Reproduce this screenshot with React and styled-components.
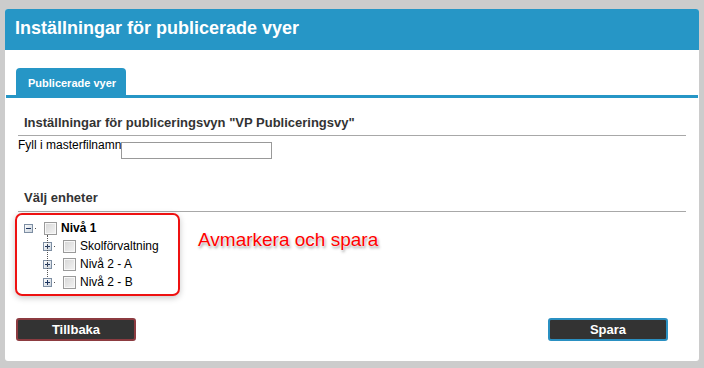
import React from 'react';
import styled, { createGlobalStyle } from 'styled-components';

const GlobalStyle = createGlobalStyle`
  html, body {
    margin: 0;
    padding: 0;
    background: #cccccc;
    font-family: "Liberation Sans", Arial, sans-serif;
  }
`;

const Panel = styled.div`
  margin: 9px 5px 0 5px;
  width: 694px;
  height: 352px;
  background: #fff;
  border-radius: 3px;
  overflow: hidden;
  display: flex;
  flex-direction: column;
`;

const Header = styled.div`
  height: 41px;
  background: #2696c6;
  padding: 0 0 3px 10px;
  box-sizing: border-box;
  line-height: 38px;
  font-size: 18px;
  font-weight: bold;
  color: #fff;
`;

const TabBar = styled.div`
  margin: 18px 1px 0 1px;
  padding-left: 10px;
  border-bottom: 3px solid #2696c6;
  display: flex;
`;

const Tab = styled.div`
  width: 110px;
  height: 27px;
  box-sizing: border-box;
  padding: 3px 0 0 12px;
  line-height: 24px;
  background: #2696c6;
  border-radius: 4px 4px 0 0;
  color: #fff;
  font-size: 11px;
  font-weight: bold;
`;

const Content = styled.div`
  padding: 0 13px;
  display: flex;
  flex-direction: column;
`;

const SectionTitle = styled.div`
  margin-top: ${p => p.$top}px;
  padding: 0 0 ${p => p.$bottom}px 6px;
  border-bottom: 1px solid #a8a8a8;
  font-size: 13px;
  line-height: 15px;
  font-weight: bold;
  color: #333;
`;

const FieldRow = styled.div`
  margin-top: 2px;
  display: flex;
  align-items: flex-start;
`;

const Label = styled.span`
  font-size: 12px;
  line-height: 14px;
  color: #000;
`;

const TextInput = styled.input`
  margin: 4px 0 0 0;
  width: 151px;
  height: 17px;
  box-sizing: border-box;
  border: 1px solid #999;
  padding: 0 2px;
  font-size: 12px;
  outline: none;
`;

const TreeRow = styled.div`
  margin: 1px 0 0 -3px;
  display: flex;
  align-items: flex-start;
`;

const TreeBox = styled.div`
  width: 165px;
  height: 83px;
  box-sizing: border-box;
  border: 2px solid #ee1111;
  border-radius: 7px;
  box-shadow: 0 2px 6px rgba(0, 0, 0, 0.22);
  padding: 4px 0 0 7px;
`;

const Node = styled.div`
  height: 18px;
  display: flex;
  align-items: center;
  padding-left: ${p => p.$indent}px;
  font-size: 12px;
  font-weight: ${p => (p.$bold ? 'bold' : 'normal')};
  color: #000;
`;

const Children = styled.div`
  position: relative;
  &::before {
    content: '';
    position: absolute;
    left: 23px;
    top: -2px;
    height: 42px;
    border-left: 1px dotted #555;
  }
`;

const Check = styled.input.attrs({ type: 'checkbox' })`
  appearance: none;
  margin: 0 4px 0 0;
  width: 13px;
  height: 13px;
  box-sizing: border-box;
  border: 1px solid #9a9a9a;
  background: linear-gradient(135deg, #d6d6d6, #f4f4f4);
  box-shadow: inset 0 0 0 1px #f8f8f8;
`;

const Note = styled.div`
  margin: 16px 0 0 18px;
  font-size: 19px;
  line-height: 22px;
  color: #ff0000;
  text-shadow: 0 0 2px #fff, 0 0 2px #fff, 1px 2px 3px rgba(0, 0, 0, 0.45);
`;

const Buttons = styled.div`
  margin: 22px 18px 0 -2px;
  display: flex;
  justify-content: space-between;
`;

const Button = styled.button`
  width: 120px;
  height: 23px;
  box-sizing: border-box;
  border: 2px solid ${p => p.$edge};
  border-radius: 3px;
  background: #333;
  color: #fff;
  font-family: "Liberation Sans", Arial, sans-serif;
  font-size: 13px;
  font-weight: bold;
  padding: 0;
`;

const Toggle = ({ open }) => (
  <svg width="20" height="9" viewBox="0 0 20 9" style={{ marginRight: 0, flex: 'none' }}>
    <defs>
      <linearGradient id="tg" x1="0" y1="0" x2="1" y2="1">
        <stop offset="0" stopColor="#ffffff" />
        <stop offset="1" stopColor="#c9d2dc" />
      </linearGradient>
    </defs>
    <rect x="0.5" y="0.5" width="8" height="8" fill="url(#tg)" stroke="#7d8ea3" />
    <rect x="2" y="4" width="5" height="1" fill="#1d3560" />
    {!open && <rect x="4" y="2" width="1" height="5" fill="#1d3560" />}
    <rect x="11" y="4" width="1" height="1" fill="#555" />
  </svg>
);

export default function App() {
  return (
    <>
      <GlobalStyle />
      <Panel>
        <Header>Inställningar för publicerade vyer</Header>
        <TabBar>
          <Tab>Publicerade vyer</Tab>
        </TabBar>
        <Content>
          <SectionTitle $top={17} $bottom={5}>
            Inställningar för publiceringsvyn "VP Publiceringsvy"
          </SectionTitle>
          <FieldRow>
            <Label>Fyll i masterfilnamn</Label>
            <TextInput type="text" />
          </FieldRow>
          <SectionTitle $top={31} $bottom={6}>Välj enheter</SectionTitle>
          <TreeRow>
            <TreeBox>
              <Node $indent={0} $bold>
                <Toggle open />
                <Check />
                Nivå 1
              </Node>
              <Children>
                <Node $indent={19}>
                  <Toggle />
                  <Check />
                  Skolförvaltning
                </Node>
                <Node $indent={19}>
                  <Toggle />
                  <Check />
                  Nivå 2 - A
                </Node>
                <Node $indent={19}>
                  <Toggle />
                  <Check />
                  Nivå 2 - B
                </Node>
              </Children>
            </TreeBox>
            <Note>Avmarkera och spara</Note>
          </TreeRow>
          <Buttons>
            <Button $edge="#8c3b40">Tillbaka</Button>
            <Button $edge="#2a90c2">Spara</Button>
          </Buttons>
        </Content>
      </Panel>
    </>
  );
}
